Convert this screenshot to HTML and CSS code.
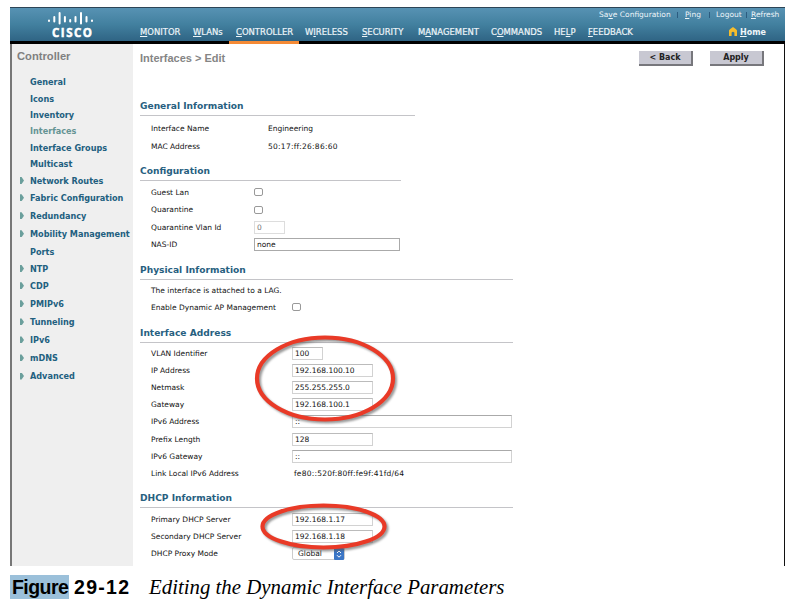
FILE: index.html
```html
<!DOCTYPE html>
<html lang="en">
<head>
<meta charset="utf-8">
<title>Interfaces &gt; Edit</title>
<link rel="stylesheet" href="styles.css">
</head>
<body>
<div class="console">
  <header class="top">
    <div class="brand">
      <svg class="bars" width="48" height="14" viewBox="0 0 48 14" stroke="#fff" stroke-width="2" stroke-linecap="round">
        <path d="M2 9.5v.5M7.3 6v4.500M12.600 2v10.500M17.900 6v4.500M23.200 9v1.500M28.500 6v4.500M34 2v10.500M39.500 6v4.500M45 9.500v.5"/>
      </svg>
      <span class="brand-name">CISCO</span>
    </div>
    <div class="top-right">
      <div class="tools">
        <a class="t-save">Sa<u>v</u>e Configuration</a><i></i><a class="t-ping"><u>P</u>ing</a><i></i><a class="t-log">Logout</a><i></i><a class="t-ref"><u>R</u>efresh</a>
      </div>
      <nav class="nav">
        <a class="n1"><u>M</u>ONITOR</a>
        <a class="n2"><u>W</u>LANs</a>
        <a class="n3 on"><u>C</u>ONTROLLER</a>
        <a class="n4">W<u>I</u>RELESS</a>
        <a class="n5"><u>S</u>ECURITY</a>
        <a class="n6">M<u>A</u>NAGEMENT</a>
        <a class="n7">C<u>O</u>MMANDS</a>
        <a class="n8">HE<u>L</u>P</a>
        <a class="n9"><u>F</u>EEDBACK</a>
        <a class="home"><svg width="8" height="9" viewBox="0 0 8 9"><path d="M0 3.500Q0 2.500 4 0q4 2.500 4 3.500V9H5.400V5.500Q4 4 2.600 5.500V9H0z" fill="#f6bd2c"/></svg><span><u>H</u>ome</span></a>
      </nav>
    </div>
  </header>
  <div class="body">
    <aside class="side">
      <h2>Controller</h2>
      <ul>
        <li>General</li>
        <li>Icons</li>
        <li>Inventory</li>
        <li class="current">Interfaces</li>
        <li>Interface Groups</li>
        <li>Multicast</li>
        <li class="more">Network Routes</li>
        <li class="more tall">Fabric Configuration</li>
        <li class="more tall">Redundancy</li>
        <li class="more tall">Mobility Management</li>
        <li class="ports">Ports</li>
        <li class="more">NTP</li>
        <li class="more tall">CDP</li>
        <li class="more tall">PMIPv6</li>
        <li class="more tall">Tunneling</li>
        <li class="more tall">IPv6</li>
        <li class="more tall">mDNS</li>
        <li class="more tall">Advanced</li>
      </ul>
    </aside>
    <main class="main">
      <div class="title">
        <h1>Interfaces &gt; Edit</h1>
        <button>&lt; Back</button>
        <button>Apply</button>
      </div>
      <section class="general">
        <h3>General Information</h3>
        <div class="row"><label>Interface Name</label><span>Engineering</span></div>
        <div class="row"><label>MAC Address</label><span class="wide">50:17:ff:26:86:60</span></div>
      </section>
      <section class="config">
        <h3>Configuration</h3>
        <div class="row"><label>Guest Lan</label><b class="check"></b></div>
        <div class="row"><label>Quarantine</label><b class="check"></b></div>
        <div class="row"><label>Quarantine Vlan Id</label><div class="field short off">0</div></div>
        <div class="row"><label>NAS-ID</label><div class="field nas">none</div></div>
      </section>
      <section class="physical">
        <h3>Physical Information</h3>
        <div class="row"><label class="note">The interface is attached to a LAG.</label></div>
        <div class="row"><label class="ap">Enable Dynamic AP Management</label><b class="check"></b></div>
      </section>
      <section class="address">
        <h3>Interface Address</h3>
        <div class="row"><label>VLAN Identifier</label><div class="field short">100</div></div>
        <div class="row"><label>IP Address</label><div class="field ip">192.168.100.10</div></div>
        <div class="row"><label>Netmask</label><div class="field ip">255.255.255.0</div></div>
        <div class="row"><label>Gateway</label><div class="field ip">192.168.100.1</div></div>
        <div class="row"><label>IPv6 Address</label><div class="field long">::</div></div>
        <div class="row"><label>Prefix Length</label><div class="field ip">128</div></div>
        <div class="row"><label>IPv6 Gateway</label><div class="field long">::</div></div>
        <div class="row"><label>Link Local IPv6 Address</label><span class="link">fe80::520f:80ff:fe9f:41fd/64</span></div>
      </section>
      <section class="dhcp">
        <h3>DHCP Information</h3>
        <div class="row"><label>Primary DHCP Server</label><div class="field ip">192.168.1.17</div></div>
        <div class="row"><label>Secondary DHCP Server</label><div class="field ip">192.168.1.18</div></div>
        <div class="row"><label>DHCP Proxy Mode</label><div class="select"><span>Global</span><svg width="10" height="12" viewBox="0 0 10 12"><rect width="10" height="12" rx="1" fill="#3b76c6"/><path d="M3 5l2-2 2 2M3 7.200l2 2 2-2" fill="none" stroke="#fff"/></svg></div></div>
      </section>
    </main>
  </div>
</div>
<p class="caption"><mark>Figure</mark><strong>29-12</strong><em>Editing the Dynamic Interface Parameters</em></p>
<svg class="marks" width="792" height="608" viewBox="0 0 792 608" fill="none">
  <g stroke="#555" stroke-opacity=".6" stroke-width="4" class="shade">
    <ellipse cx="327" cy="380.500" rx="68" ry="41"/>
    <ellipse cx="325.500" cy="528.500" rx="61" ry="21"/>
  </g>
  <g stroke="#e93a27" stroke-width="4.200">
    <ellipse cx="325" cy="378.500" rx="68" ry="41"/>
    <ellipse cx="323.500" cy="526.500" rx="61" ry="21"/>
  </g>
</svg>
</body>
</html>
```
FILE: styles.css
```css
* { box-sizing: border-box; }
body {
  margin: 0;
  width: 792px;
  height: 608px;
  overflow: hidden;
  background: #fff;
  font-family: "DejaVu Sans", Verdana, sans-serif;
  font-size: 7.5px;
  color: #111;
}
h1, h2, h3, ul, p { margin: 0; padding: 0; }
u { text-underline-offset: 1px; text-decoration-thickness: 1px; }
a, label, span, li, h1, h2, h3, em { white-space: nowrap; }

.console {
  margin: 7px 0 0 10px;
  width: 775px;
  height: 559px;
}

/* header */
.top {
  display: flex;
  height: 37px;
  border-top: 1px solid #2c4556;
  border-bottom: 3px solid #000;
  background: linear-gradient(#5792b3, #42809f 50%, #2f6484);
  color: #eef5f9;
}
.brand {
  width: 130px;
  padding: 3px 0 0 37px;
}
.bars { display: block; }
.brand-name {
  display: block;
  margin: 2px 0 0 5px;
  font: bold 11.5px/11px "Open Sans", sans-serif;
  letter-spacing: 1.5px;
  color: #fff;
  -webkit-text-stroke: .5px #fff;
}
.top-right { flex: 1; }
.tools {
  display: flex;
  height: 13px;
  padding-left: 459px;
  line-height: 13px;
  align-items: center;
}
.tools > * { flex: none; }
.tools i { width: 1px; height: 6px; background: #2c5c80; }
.t-save { width: 78px; }
.t-ping { width: 24px; margin-left: 7px; }
.t-log { width: 30px; margin-left: 6px; }
.t-ref { margin-left: 4px; }
.nav {
  display: flex;
  height: 23px;
  line-height: 23px;
  font-size: 8.45px;
  -webkit-text-stroke: .2px #eef5f9;
}
.nav a { flex: none; height: 23px; }
.n1 { width: 53px; }
.n2 { width: 36px; }
.n3 { width: 70px; padding-left: 7px; }
.on { border-bottom: 3px solid #f58a35; }
.n4 { width: 63px; padding-left: 6px; }
.n5 { width: 56px; }
.n6 { width: 73px; }
.n7 { width: 63px; }
.n8 { width: 34px; }
.n9 { width: 141px; }
.home { display: flex; font-weight: bold; font-size: 8px; -webkit-text-stroke: 0; }
.home svg { margin: 6px 3px 0 0; }

/* columns */
.body { display: flex; height: 522px; }
.side {
  width: 123px;
  border-left: 2px solid #777;
  background: #efefef;
}
.side h2 {
  height: 30px;
  padding-left: 5px;
  font: bold 11.2px/25px "Liberation Sans", sans-serif;
  color: #808080;
}
.side ul { list-style: none; font-weight: bold; font-size: 8.15px; color: #22607f; }
.side li {
  display: flex;
  align-items: center;
  height: 16.4px;
  padding-left: 18px;
}
.side .tall { height: 18.05px; }
.side .ports { height: 17.5px; }
.side .current { color: #659494; }
.side .more { padding-left: 8px; }
.more::before {
  content: "";
  flex: none;
  width: 4px;
  height: 7px;
  margin-right: 6px;
  background: #6b9f9c;
  clip-path: polygon(0 0, 40% 0, 100% 50%, 40% 100%, 0 100%);
}
.main {
  width: 652px;
  padding-left: 7px;
  border-right: 1px solid #111;
}
.title { display: flex; height: 52px; padding-top: 7px; }
.title h1 {
  width: 499px;
  font: bold 11px/15px "Liberation Sans", sans-serif;
  color: #858585;
}
.title button {
  width: 54px;
  height: 15px;
  margin-right: 17px;
  padding: 0;
  border: 0 solid #77777c;
  border-width: 0 2px 2px 0;
  background: #c8c8d2;
  font: bold 8px "DejaVu Sans", sans-serif;
  color: #222;
}
h3 {
  width: 373px;
  height: 20px;
  border-bottom: 1px solid #c4c4c8;
  font-size: 9.1px;
  line-height: 20px;
  color: #27607f;
}
.row {
  display: flex;
  align-items: center;
  height: 17.1px;
  padding-left: 11px;
}
.row label { flex: none; width: 141px; }
.general h3 { width: 275px; margin-bottom: 3px; }
.general .row { height: 18px; }
.general label { width: 117px; }
.wide { letter-spacing: .26px; }
.config { margin-top: 6px; }
.config h3 { width: 261px; margin-bottom: 2.4px; }
.config .row { height: 17.5px; }
.config label { width: 103px; }
.physical { margin-top: 6.6px; }
.physical h3 { margin-bottom: 2px; }
.physical .row { height: 17px; }
.address { margin-top: 7px; }
.address h3 { margin-bottom: 2px; }
.dhcp { margin-top: 6.2px; }
.dhcp h3 { margin-bottom: 2.8px; }
.check {
  width: 9px;
  height: 8px;
  border: 1px solid #999;
  border-radius: 2px;
}
.field {
  height: 13px;
  padding-left: 2px;
  border: 1px solid #d2d2d2;
  border-top-color: #bbb;
  line-height: 12px;
}
.short { width: 31px; }
.off { color: #777; border-color: #ddd; }
.nas { width: 146px; border-color: #aaa; }
.ip { width: 81px; }
.long { width: 220px; border-top-color: #aaa; }
.link { padding-left: 2px; letter-spacing: .22px; }
.select {
  display: flex;
  width: 53px;
  height: 13px;
  justify-content: space-between;
  padding-left: 5px;
  border: 1px solid #ccc;
  border-radius: 2px;
  line-height: 11px;
}
.select svg { flex: none; }

/* caption */
.caption {
  display: flex;
  margin: 9px 0 0 10px;
  height: 24px;
  line-height: 25px;
  font-family: "Liberation Sans", sans-serif;
  font-size: 19.5px;
  color: #000;
}
mark { width: 59px; padding-left: 2px; background: #9bc0da; font-weight: bold; letter-spacing: -.55px; color: #000; }
strong { width: 75px; margin-left: 5px; letter-spacing: 1.3px; }
em { font-family: "Liberation Serif", serif; font-size: 20.85px; }

/* hand-drawn rings laid over the form */
.marks { position: absolute; left: 0; top: 0; pointer-events: none; }
.shade { filter: blur(1px); }
```
